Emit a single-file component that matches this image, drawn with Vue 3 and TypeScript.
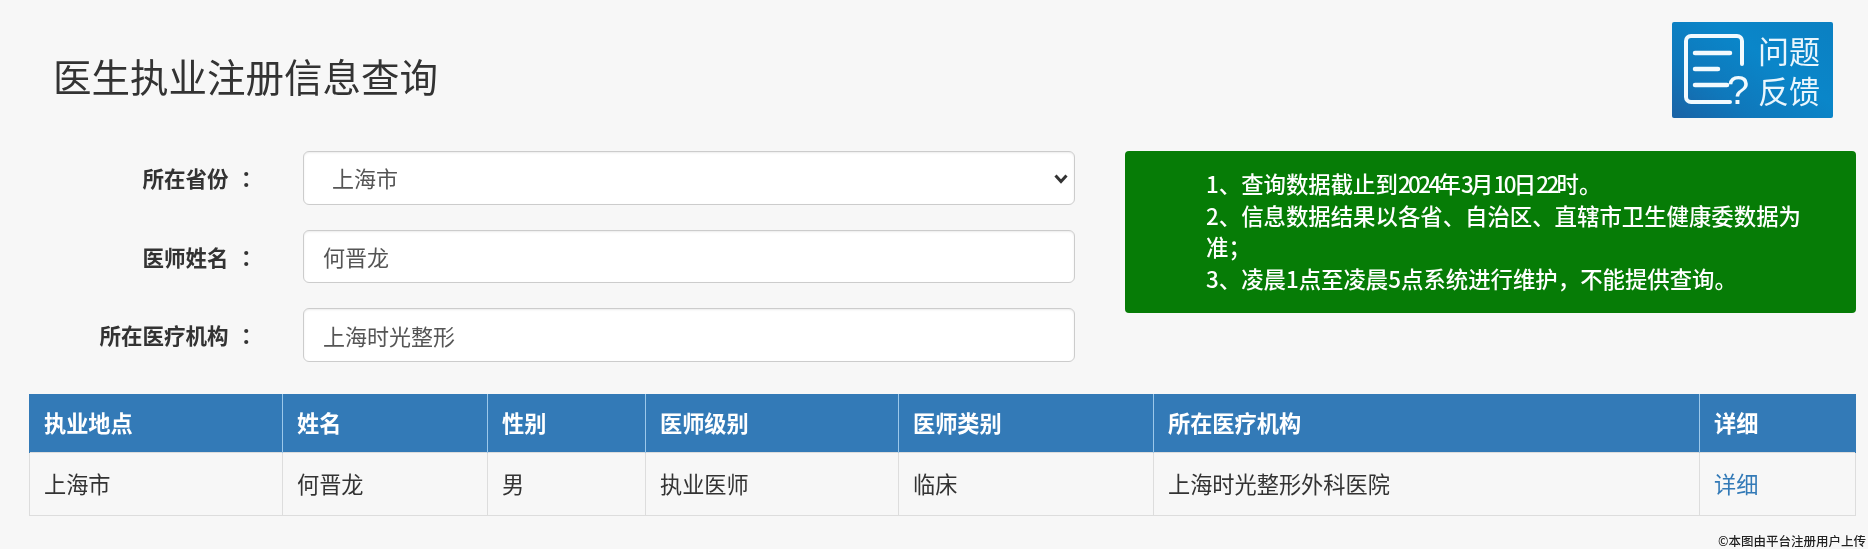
<script setup lang="ts">
const columns = ['执业地点', '姓名', '性别', '医师级别', '医师类别', '所在医疗机构', '详细']
const widths = [253, 205, 158, 253, 255, 546, 156]
const row = ['上海市', '何晋龙', '男', '执业医师', '临床', '上海时光整形外科医院']
const feedbackLabel = '问题\n反馈'
</script>

<template>
  <div class="page">
    <header class="top">
      <h1 class="title">医生执业注册信息查询</h1>
      <div class="feedback">
        <svg class="feedback-icon" width="86" height="96" viewBox="0 0 86 96" fill="none">
          <path d="M58 80H19a5 5 0 0 1-5-5V19a5 5 0 0 1 5-5H65a5 5 0 0 1 5 5V42" stroke="#f2fafe" stroke-width="4" stroke-linecap="round" />
          <path d="M23 31H58M23 47H46M23 63H55" stroke="#f2fafe" stroke-width="4.5" stroke-linecap="round" />
          <text x="55" y="82" class="question">?</text>
        </svg>
        <div class="feedback-text">{{ feedbackLabel }}</div>
      </div>
    </header>

    <section class="query">
      <form class="form">
        <div class="field">
          <label class="label">所在省份<span class="colon">：</span></label>
          <div class="select-wrap">
            <select class="control select"><option>上海市</option></select>
            <svg class="chevron" width="14" height="10" viewBox="0 0 14 10" fill="none">
              <path d="M1.5 1.5L7 7.5L12.500 1.500" stroke="#333" stroke-width="3" />
            </svg>
          </div>
        </div>
        <div class="field">
          <label class="label">医师姓名<span class="colon">：</span></label>
          <input class="control" value="何晋龙" />
        </div>
        <div class="field">
          <label class="label">所在医疗机构<span class="colon">：</span></label>
          <input class="control" value="上海时光整形" />
        </div>
      </form>
      <div class="notice">
        <p>1、查询数据截止到<span class="num">2024</span>年<span class="num">3</span>月<span class="num">10</span>日<span class="num">22</span>时。</p>
        <p>2、信息数据结果以各省、自治区、直辖市卫生健康委数据为准；</p>
        <p>3、凌晨1点至凌晨5点系统进行维护，不能提供查询。</p>
      </div>
    </section>

    <table class="table">
      <colgroup>
        <col v-for="(w, i) in widths" :key="i" :style="{ width: w + 'px' }" />
      </colgroup>
      <thead>
        <tr><th v-for="c in columns" :key="c">{{ c }}</th></tr>
      </thead>
      <tbody>
        <tr>
          <td v-for="(c, i) in row" :key="i">{{ c }}</td>
          <td><a class="link">详细</a></td>
        </tr>
      </tbody>
    </table>

    <div class="watermark">©本图由平台注册用户上传</div>
  </div>
</template>

<style>
html, body { margin: 0; background: #f7f7f7; }
</style>

<style scoped>
.page {
  position: relative;
  box-sizing: border-box;
  width: 1868px;
  height: 549px;
  overflow: hidden;
  padding: 22px 12px 0 29px;
  background: #f7f7f7;
  color: #333;
  font-family: "Noto Sans CJK SC", "Liberation Sans", sans-serif;
  font-size: 22px;
  line-height: 31.5px;
  filter: blur(0.35px);
}
.top {
  display: flex;
  justify-content: space-between;
  height: 129px;
  padding-right: 23px;
}
.title {
  margin: 28px 0 0 24px;
  font-size: 38.5px;
  line-height: 50px;
  font-weight: 400;
  color: #333;
}
.feedback {
  display: flex;
  width: 161px;
  height: 96px;
  border-radius: 2px;
  background: linear-gradient(35deg, #1a62a5 0%, #0f78bb 28%, #0a86c9 60%, #0b80c2 100%);
}
.feedback-icon { flex: none; }
.question {
  font-family: "Liberation Sans", sans-serif;
  font-size: 40px;
  fill: #f2fafe;
}
.feedback-text {
  padding: 8px 0 0 0;
  color: #eaf6fd;
  font-size: 31px;
  line-height: 40px;
  white-space: pre-line;
}
.query {
  display: flex;
  gap: 50px;
  height: 243px;
}
.form {
  display: flex;
  flex-direction: column;
  gap: 25px;
  width: 1046px;
  flex: none;
}
.field {
  display: flex;
  align-items: center;
  height: 53.5px;
}
.label {
  flex: none;
  width: 274px;
  padding-right: 46px;
  box-sizing: border-box;
  text-align: right;
  font-size: 21.5px;
  font-weight: 700;
}
.colon {
  margin-left: 7px;
  font-family: "Noto Sans CJK TC", sans-serif;
}
.control {
  box-sizing: border-box;
  width: 772px;
  height: 53.5px;
  padding: 0 19px;
  border: 1px solid #ccc;
  border-radius: 6px;
  background: #fff;
  color: #555;
  font: inherit;
  outline: none;
  box-shadow: inset 0 1px 2px rgba(0, 0, 0, 0.08);
}
.select-wrap {
  position: relative;
  width: 772px;
  height: 53.5px;
}
.select {
  display: block;
  padding-left: 28px;
  appearance: none;
}
.chevron {
  position: absolute;
  top: 23px;
  right: 7px;
  pointer-events: none;
}
.notice {
  box-sizing: border-box;
  width: 731px;
  height: 162px;
  padding: 17px 30px 0 81px;
  border-radius: 4px;
  background: #067c06;
  color: #fff;
  font-size: 22.4px;
  font-weight: 500;
}
.notice p { margin: 0; }
.num { letter-spacing: -2.6px; }
.table {
  table-layout: fixed;
  width: 1826px;
  border-collapse: collapse;
  font-size: 22.2px;
}
th, td {
  box-sizing: border-box;
  padding: 0 14px;
  text-align: left;
}
th {
  height: 58px;
  background: #337ab7;
  border-left: 1px solid #9cc8ea;
  border-right: 1px solid #9cc8ea;
  color: #fff;
  font-weight: 700;
}
th:first-child { border-left-color: #337ab7; }
th:last-child { border-right-color: #337ab7; }
td {
  height: 63px;
  border: 1px solid #ddd;
}
.link { color: #337ab7; }
.watermark {
  position: absolute;
  right: 2px;
  bottom: 1px;
  font-size: 12.5px;
  line-height: 15px;
  font-weight: 500;
  color: #222;
  text-shadow: 0 0 2px #fff, 0 0 1px #fff, 0 0 1px #fff;
}
</style>
